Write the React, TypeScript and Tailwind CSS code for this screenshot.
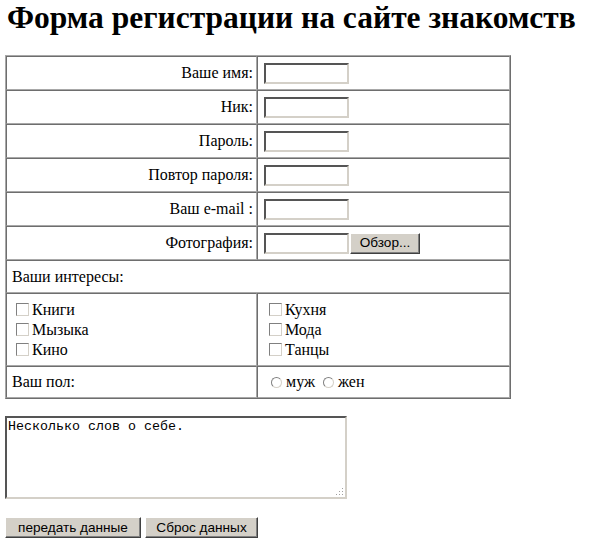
const serif = "font-['Liberation_Serif','Times_New_Roman',serif]";
const sans = "font-['Liberation_Sans',Arial,sans-serif]";

// classic inset cell border
const cell =
  "p-0 border border-solid border-t-[#6e6e6e] border-l-[#6e6e6e] border-b-[#a8a8a8] border-r-[#a8a8a8]";

const fields = ["Ваше имя:", "Ник:", "Пароль:", "Повтор пароля:", "Ваш e-mail :"];

function TextBox() {
  return (
    <input
      type="text"
      className="block w-[85px] h-[21px] bg-white border-2 border-solid border-t-[#555555] border-l-[#555555] border-b-[#d4d0c8] border-r-[#d4d0c8] outline-none"
    />
  );
}

function WinButton({ children, width }: { children: React.ReactNode; width: string }) {
  return (
    <button
      type="button"
      className={`${sans} ${width} h-[21px] bg-[#d4d0c8] text-[13.6px] leading-none text-black border border-solid border-t-white border-l-white border-b-[#404040] border-r-[#404040] shadow-[inset_-1px_-1px_0_#808080]`}
    >
      {children}
    </button>
  );
}

function Check({ label }: { label: string }) {
  return (
    <label className="flex items-center h-[20px] gap-[3px]">
      <input
        type="checkbox"
        className="appearance-none w-[13px] h-[13px] bg-white border border-solid border-t-[#808080] border-l-[#808080] border-b-[#d4d0c8] border-r-[#d4d0c8]"
      />
      <span>{label}</span>
    </label>
  );
}

function Radio({ label }: { label: string }) {
  return (
    <label className="flex items-center gap-[4px]">
      <input
        type="radio"
        name="sex"
        className="appearance-none w-[11px] h-[11px] rounded-full bg-white border border-solid border-t-[#808080] border-l-[#808080] border-b-[#d4d0c8] border-r-[#d4d0c8]"
      />
      <span>{label}</span>
    </label>
  );
}

export default function App() {
  return (
    <div className={`${serif} bg-white text-black w-[589px] h-[552px] px-[5px]`}>

      {/* Title */}
      <h1 className="ml-[2px] text-[31.5px] leading-[35px] font-bold whitespace-nowrap">
        Форма регистрации на сайте знакомств
      </h1>

      {/* Form table */}
      <table className="mt-[20px] w-[506px] border-separate border-spacing-0 border border-solid border-t-[#a8a8a8] border-l-[#a8a8a8] border-b-[#6e6e6e] border-r-[#6e6e6e] text-[16px]">
        <tbody>
          {fields.map((f) => (
            <tr key={f}>
              <td className={`${cell} w-[251px] h-[34px] text-right pr-[3px] align-middle`}>{f}</td>
              <td className={`${cell} h-[34px] pl-[6px] align-middle`}>
                <TextBox />
              </td>
            </tr>
          ))}

          <tr>
            <td className={`${cell} w-[251px] h-[34px] text-right pr-[3px] align-middle`}>Фотография:</td>
            <td className={`${cell} h-[34px] pl-[6px] align-middle`}>
              <div className="flex items-center gap-[1px]">
                <TextBox />
                <WinButton width="w-[70px]">Обзор...</WinButton>
              </div>
            </td>
          </tr>

          <tr>
            <td colSpan={2} className={`${cell} h-[33px] pl-[5px] align-middle`}>
              Ваши интересы:
            </td>
          </tr>

          <tr>
            <td className={`${cell} h-[73px] pl-[9px] align-middle`}>
              <Check label="Книги" />
              <Check label="Мызыка" />
              <Check label="Кино" />
            </td>
            <td className={`${cell} h-[73px] pl-[11px] align-middle`}>
              <Check label="Кухня" />
              <Check label="Мода" />
              <Check label="Танцы" />
            </td>
          </tr>

          <tr>
            <td className={`${cell} h-[32px] pl-[5px] align-middle`}>Ваш пол:</td>
            <td className={`${cell} h-[32px] pl-[13px] align-middle`}>
              <div className="flex items-center gap-[8px]">
                <Radio label="муж" />
                <Radio label="жен" />
              </div>
            </td>
          </tr>
        </tbody>
      </table>

      {/* About */}
      <div className="relative mt-[17px] w-[342px] h-[83px]">
        <textarea
          defaultValue="Несколько слов о себе."
          className="block w-full h-full resize-none font-['Liberation_Mono','Courier_New',monospace] text-[13.33px] leading-[15px] px-[1px] py-[1px] bg-white border-2 border-solid border-t-[#555555] border-l-[#555555] border-b-[#d4d0c8] border-r-[#d4d0c8] outline-none"
        />
        <svg className="absolute right-[3px] bottom-[3px]" width="8" height="8" viewBox="0 0 8 8">
          <rect x="6" y="0" width="1" height="1" fill="#a0a0a0" />
          <rect x="3" y="3" width="1" height="1" fill="#a0a0a0" />
          <rect x="6" y="3" width="1" height="1" fill="#a0a0a0" />
          <rect x="0" y="6" width="1" height="1" fill="#a0a0a0" />
          <rect x="3" y="6" width="1" height="1" fill="#a0a0a0" />
          <rect x="6" y="6" width="1" height="1" fill="#a0a0a0" />
        </svg>
      </div>

      {/* Buttons */}
      <div className="mt-[18px] flex gap-[4px]">
        <WinButton width="w-[136px]">передать данные</WinButton>
        <WinButton width="w-[113px]">Сброс данных</WinButton>
      </div>
    </div>
  );
}
